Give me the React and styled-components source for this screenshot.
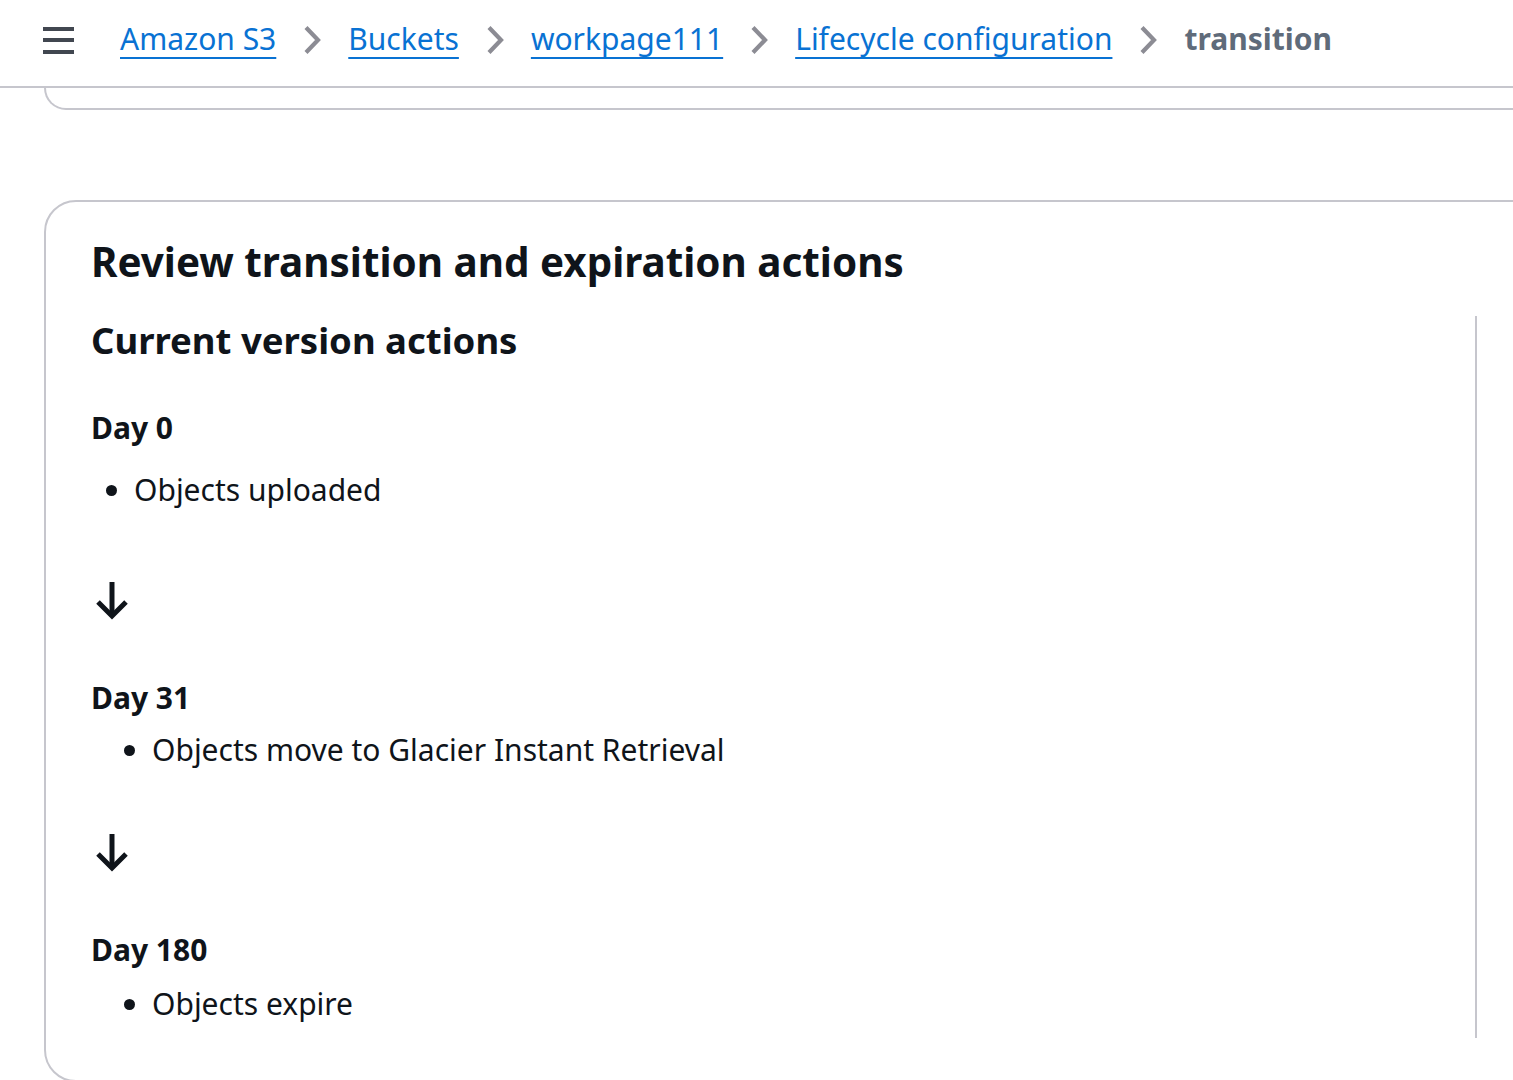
import styled, { createGlobalStyle } from "styled-components";

const Global = createGlobalStyle`
  html, body {
    margin: 0;
    padding: 0;
    background: #fff;
    overflow: hidden;
  }
  body {
    font-family: "Noto Sans", "Open Sans", Arial, sans-serif;
    color: #0f141a;
  }
  * { box-sizing: border-box; }
`;

const timeline = [
  { day: "Day 0", items: ["Objects uploaded"], indent: 0, gap: 22, after: 8 },
  { day: "Day 31", items: ["Objects move to Glacier Instant Retrieval"], indent: 18, gap: 12, after: 0 },
  { day: "Day 180", items: ["Objects expire"], indent: 18, gap: 14, after: 0 },
];

const crumbs = ["Amazon S3", "Buckets", "workpage111", "Lifecycle configuration"];

const Chevron = () => (
  <ChevronBox>
    <svg width="18" height="30" viewBox="0 0 18 30" fill="none">
      <path d="M3 2.5 L15 15 L3 27.5" stroke="#8c8c94" strokeWidth="4.2" />
    </svg>
  </ChevronBox>
);

const ArrowDown = () => (
  <svg width="34" height="38" viewBox="0 0 34 38" fill="none">
    <path d="M17 0 V34" stroke="#0f141a" strokeWidth="5" />
    <path d="M3 20 L17 34 L31 20" stroke="#0f141a" strokeWidth="5" />
  </svg>
);

const App = () => {
  return (
    <>
      <Global />
      <Header>
        <Burger>
          <span />
          <span />
          <span />
        </Burger>
        <Crumbs>
          {crumbs.map((c) => (
            <Crumb key={c}>
              <a href="#">{c}</a>
              <Chevron />
            </Crumb>
          ))}
          <Current>transition</Current>
        </Crumbs>
      </Header>
      <Main>
        <PrevCard />
        <Card>
          <Title>Review transition and expiration actions</Title>
          <Columns>
            <Timeline>
              <Subtitle>Current version actions</Subtitle>
              {timeline.map((t, i) => (
                <Step key={t.day}>
                  {i > 0 && (
                    <ArrowRow>
                      <ArrowDown />
                    </ArrowRow>
                  )}
                  <DayLabel>{t.day}</DayLabel>
                  <Bullets $indent={t.indent} $gap={t.gap} $after={t.after}>
                    {t.items.map((it) => (
                      <li key={it}>{it}</li>
                    ))}
                  </Bullets>
                </Step>
              ))}
            </Timeline>
            <Side />
          </Columns>
        </Card>
      </Main>
    </>
  );
};

const Header = styled.header`
  height: 88px;
  display: flex;
  align-items: center;
  padding-left: 43px;
  border-bottom: 2px solid #c6c6cd;
  gap: 46px;
`;

const Burger = styled.div`
  width: 31px;
  display: flex;
  flex-direction: column;
  gap: 7.5px;
  margin-top: -6px;
  span {
    display: block;
    height: 4px;
    background: #414750;
  }
`;

const Crumbs = styled.nav`
  display: flex;
  align-items: center;
  font-size: 30px;
  line-height: 40px;
  margin-top: -8px;
`;

const Crumb = styled.div`
  display: flex;
  align-items: center;
  a {
    color: #0972d3;
    text-decoration: underline;
    text-decoration-thickness: 2px;
    text-underline-offset: 7px;
  }
`;

const ChevronBox = styled.span`
  display: flex;
  width: 72px;
  justify-content: center;
  padding-top: 2px;
`;

const Current = styled.span`
  color: #5f6b7a;
  font-weight: 700;
`;

const Main = styled.main`
  padding-left: 44px;
`;

const PrevCard = styled.div`
  height: 22px;
  margin-right: -60px;
  border: 2px solid #c6c6cd;
  border-top: none;
  border-bottom-left-radius: 32px;
  margin-bottom: 90px;
`;

const Card = styled.section`
  width: calc(100% + 60px);
  border: 2px solid #c6c6cd;
  border-radius: 32px;
  padding: 32px 0 42px 45px;
`;

const Title = styled.h2`
  margin: 0;
  font-size: 40.4px;
  line-height: 56px;
  font-weight: 700;
`;

const Columns = styled.div`
  display: grid;
  grid-template-columns: 1386px 1fr;
  margin-top: 26px;
`;

const Timeline = styled.div`
  border-right: 2px solid #c6c6cd;
  padding-bottom: 14px;
`;

const Side = styled.div``;

const Subtitle = styled.h3`
  margin: 0 0 44px;
  font-size: 36.5px;
  line-height: 48px;
  font-weight: 700;
`;

const Step = styled.div`
  display: flex;
  flex-direction: column;
`;

const ArrowRow = styled.div`
  height: 160px;
  display: flex;
  align-items: flex-start;
  padding: 64px 0 0 4px;
`;

const DayLabel = styled.div`
  font-size: 30px;
  line-height: 40px;
  font-weight: 700;
`;

const Bullets = styled.ul`
  margin: ${(p) => p.$gap}px 0 ${(p) => p.$after}px;
  padding-left: ${(p) => 43 + p.$indent}px;
  font-size: 30px;
  line-height: 40px;
`;

export default App;
